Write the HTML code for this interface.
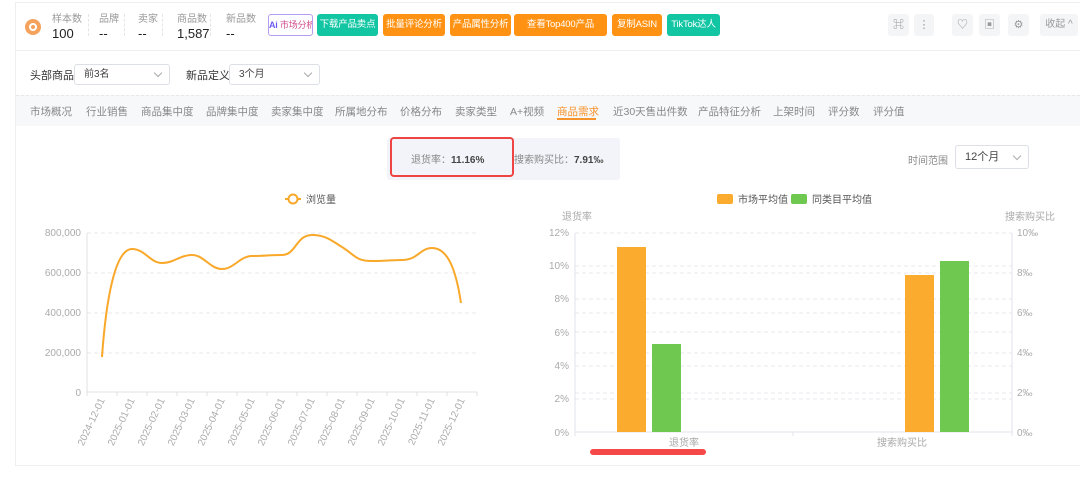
<!DOCTYPE html>
<html><head><meta charset="utf-8"><style>
*{margin:0;padding:0;box-sizing:border-box}
body{width:1080px;height:480px;background:#fff;font-family:"Liberation Sans","Noto Sans CJK SC",sans-serif;position:relative;overflow:hidden;color:#333}
.a{position:absolute;white-space:nowrap}
.lbl{font-size:10px;color:#999}
.val{font-size:13px;color:#222}
.btn{position:absolute;top:14px;height:22px;border-radius:3px;color:#fff;font-size:9.5px;line-height:22px;text-align:center;white-space:nowrap;overflow:hidden;letter-spacing:-0.2px}
.ib{position:absolute;top:14px;height:22px;width:21px;background:#f4f5f7;border-radius:3px;color:#999;font-size:11px;text-align:center;line-height:22px}
.sel{position:absolute;height:21px;border:1px solid #dcdfe6;border-radius:3px;font-size:10px;color:#444;line-height:19px;padding-left:9px;background:#fff}
.sel i{position:absolute;right:8px;top:5px;width:6px;height:6px;border-right:1px solid #aaa;border-bottom:1px solid #aaa;transform:rotate(45deg)}
.tab{position:absolute;top:104px;font-size:10.5px;color:#888;white-space:nowrap}
</style></head><body>
<div class="a" style="left:15px;top:2px;width:1065px;height:464px;border:1px solid #eee;border-right:none"></div>
<div class="a" style="left:16px;top:50px;width:1064px;height:1px;background:#eee"></div>
<div class="a" style="left:25px;top:19px;width:16px;height:16px;border-radius:50%;background:#f5a25d"></div>
<div class="a" style="left:29px;top:23px;width:8px;height:8px;border-radius:50%;border:2px solid #fff"></div>
<div class="a lbl" style="left:52px;top:10px">样本数</div><div class="a val" style="left:52px;top:26px">100</div>
<div class="a" style="left:88px;top:14px;height:22px;border-left:1px dashed #e5e5e5"></div>
<div class="a lbl" style="left:99px;top:10px">品牌</div><div class="a val" style="left:99px;top:26px">--</div>
<div class="a" style="left:124px;top:14px;height:22px;border-left:1px dashed #e5e5e5"></div>
<div class="a lbl" style="left:138px;top:10px">卖家</div><div class="a val" style="left:138px;top:26px">--</div>
<div class="a" style="left:162px;top:14px;height:22px;border-left:1px dashed #e5e5e5"></div>
<div class="a lbl" style="left:177px;top:10px">商品数</div><div class="a val" style="left:177px;top:26px">1,587</div>
<div class="a" style="left:210px;top:14px;height:22px;border-left:1px dashed #e5e5e5"></div>
<div class="a lbl" style="left:226px;top:10px">新品数</div><div class="a val" style="left:226px;top:26px">--</div>
<div class="btn" style="left:268px;width:45px;border:1px solid #b69cf0;color:#d04a8a;background:#fff;line-height:20px;font-size:9px"><b style="color:#6b5cf0">Ai</b> 市场分析</div>
<div class="btn" style="left:317px;width:61px;background:#13c6a3">下载产品卖点</div>
<div class="btn" style="left:383px;width:62px;background:#ff9212">批量评论分析</div>
<div class="btn" style="left:450px;width:61px;background:#ff9212">产品属性分析</div>
<div class="btn" style="left:514px;width:93px;background:#ff9212">查看Top400产品</div>
<div class="btn" style="left:612px;width:50px;background:#ff9212">复制ASIN</div>
<div class="btn" style="left:667px;width:53px;background:#13c6a3">TikTok达人</div>
<div class="ib" style="left:888px">⌘</div>
<div class="ib" style="left:914px;width:20px">⋮</div>
<div class="ib" style="left:952px">♡</div>
<div class="ib" style="left:979px">▣</div>
<div class="ib" style="left:1008px">⚙</div>
<div class="ib" style="left:1040px;width:38px;font-size:10px">收起 ^</div>
<div class="a" style="left:30px;top:67px;font-size:11px;color:#333">头部商品</div>
<div class="sel" style="left:74px;top:64px;width:96px">前3名<i></i></div>
<div class="a" style="left:186px;top:67px;font-size:11px;color:#333">新品定义</div>
<div class="sel" style="left:229px;top:64px;width:91px">3个月<i></i></div>
<div class="a" style="left:16px;top:95px;width:1064px;height:31px;background:#f7f8fa;border-top:1px dashed #e8e8e8"></div>
<div class="tab" style="left:30px">市场概况</div><div class="tab" style="left:86px">行业销售</div><div class="tab" style="left:141px">商品集中度</div><div class="tab" style="left:206px">品牌集中度</div><div class="tab" style="left:271px">卖家集中度</div><div class="tab" style="left:335px">所属地分布</div><div class="tab" style="left:400px">价格分布</div><div class="tab" style="left:455px">卖家类型</div><div class="tab" style="left:510px">A+视频</div>
<div class="tab" style="left:557px;color:#f7932b">商品需求</div>
<div class="a" style="left:557px;top:118px;width:39px;height:2px;background:#f7932b"></div>
<div class="tab" style="left:613px">近30天售出件数</div><div class="tab" style="left:698px">产品特征分析</div><div class="tab" style="left:773px">上架时间</div><div class="tab" style="left:828px">评分数</div><div class="tab" style="left:873px">评分值</div>
<div class="a" style="left:387px;top:138px;width:233px;height:42px;background:#f3f4f9;border-radius:3px"></div>
<div class="a" style="left:390px;top:137px;width:124px;height:40px;border:2.5px solid #ee4444;border-radius:4px"></div>
<div class="a" style="left:411px;top:151px;font-size:10px;color:#888">退货率：<b style="color:#444">11.16%</b></div>
<div class="a" style="left:514px;top:151px;font-size:10px;color:#888">搜索购买比：<b style="color:#444">7.91‰</b></div>
<div class="a" style="left:908px;top:152px;font-size:10px;color:#888">时间范围</div>
<div class="sel" style="left:955px;top:145px;width:74px;height:24px;line-height:22px;font-size:11px">12个月<i style="top:7px"></i></div>
<svg class="a" style="left:0;top:0" width="1080" height="480" font-family="Liberation Sans,Noto Sans CJK SC,sans-serif">
<line x1="285" y1="199" x2="301" y2="199" stroke="#f9a82a" stroke-width="2"/><circle cx="293" cy="199" r="4.5" fill="#fff" stroke="#f9a82a" stroke-width="2"/>
<text x="306" y="203" font-size="10" fill="#555">浏览量</text>
<g stroke="#e8e8e8" stroke-dasharray="4,3"><line x1="87" y1="233" x2="477" y2="233"/><line x1="87" y1="273" x2="477" y2="273"/><line x1="87" y1="313" x2="477" y2="313"/><line x1="87" y1="353" x2="477" y2="353"/></g>
<line x1="87" y1="233" x2="87" y2="392" stroke="#e0e0e0"/><line x1="87" y1="392" x2="477" y2="392" stroke="#e0e0e0"/>
<g font-size="10" fill="#aaa" text-anchor="end"><text x="81" y="236">800,000</text><text x="81" y="276">600,000</text><text x="81" y="316">400,000</text><text x="81" y="356">200,000</text><text x="81" y="396">0</text></g>
<g stroke="#e0e0e0"><line x1="87" y1="392" x2="87" y2="396"/><line x1="117" y1="392" x2="117" y2="396"/><line x1="147" y1="392" x2="147" y2="396"/><line x1="177" y1="392" x2="177" y2="396"/><line x1="207" y1="392" x2="207" y2="396"/><line x1="237" y1="392" x2="237" y2="396"/><line x1="267" y1="392" x2="267" y2="396"/><line x1="297" y1="392" x2="297" y2="396"/><line x1="327" y1="392" x2="327" y2="396"/><line x1="357" y1="392" x2="357" y2="396"/><line x1="387" y1="392" x2="387" y2="396"/><line x1="417" y1="392" x2="417" y2="396"/><line x1="447" y1="392" x2="447" y2="396"/><line x1="477" y1="392" x2="477" y2="396"/></g>
<g font-size="10" fill="#aaa" text-anchor="end">
<text transform="translate(105,400) rotate(-65)">2024-12-01</text><text transform="translate(135,400) rotate(-65)">2025-01-01</text><text transform="translate(165,400) rotate(-65)">2025-02-01</text><text transform="translate(195,400) rotate(-65)">2025-03-01</text><text transform="translate(225,400) rotate(-65)">2025-04-01</text><text transform="translate(255,400) rotate(-65)">2025-05-01</text><text transform="translate(285,400) rotate(-65)">2025-06-01</text><text transform="translate(315,400) rotate(-65)">2025-07-01</text><text transform="translate(345,400) rotate(-65)">2025-08-01</text><text transform="translate(375,400) rotate(-65)">2025-09-01</text><text transform="translate(405,400) rotate(-65)">2025-10-01</text><text transform="translate(435,400) rotate(-65)">2025-11-01</text><text transform="translate(465,400) rotate(-65)">2025-12-01</text></g>
<path fill="none" stroke="#f9a82a" stroke-width="2" d="M102 357 C106 300 115 249 132 249 C145 249 150 263 162 263 C174 263 180 255 192 255 C204 255 210 269 222 269 C234 269 240 256 252 256 C264 256 270 255 282 255 C296 255 296 235 312 235 C326 235 332 241 342 247 C356 256 356 261 372 261 C388 261 392 260 402 260 C418 260 420 248 432 248 C448 248 456 270 461 303"/>
<rect x="717" y="194" width="16" height="10" rx="2" fill="#fbab2e"/><text x="738" y="203" font-size="10" fill="#555">市场平均值</text>
<rect x="791" y="194" width="16" height="10" rx="2" fill="#6fc951"/><text x="812" y="203" font-size="10" fill="#555">同类目平均值</text>
<text x="562" y="220" font-size="10" fill="#aaa">退货率</text><text x="1005" y="220" font-size="10" fill="#aaa">搜索购买比</text>
<g stroke="#e8e8ee" stroke-dasharray="4,3"><line x1="575" y1="233" x2="1012" y2="233"/><line x1="575" y1="266" x2="1012" y2="266"/><line x1="575" y1="299" x2="1012" y2="299"/><line x1="575" y1="332" x2="1012" y2="332"/><line x1="575" y1="366" x2="1012" y2="366"/><line x1="575" y1="399" x2="1012" y2="399"/><line x1="575" y1="273" x2="1012" y2="273"/><line x1="575" y1="313" x2="1012" y2="313"/><line x1="575" y1="353" x2="1012" y2="353"/><line x1="575" y1="393" x2="1012" y2="393"/></g>
<line x1="575" y1="233" x2="575" y2="436" stroke="#e0e3ea"/><line x1="1012" y1="233" x2="1012" y2="436" stroke="#e0e3ea"/><line x1="575" y1="432" x2="1012" y2="432" stroke="#e0e3ea"/><line x1="793" y1="432" x2="793" y2="436" stroke="#e0e3ea"/>
<g font-size="10" fill="#aaa" text-anchor="end"><text x="569" y="236">12%</text><text x="569" y="269">10%</text><text x="569" y="302">8%</text><text x="569" y="336">6%</text><text x="569" y="369">4%</text><text x="569" y="402">2%</text><text x="569" y="436">0%</text></g>
<g font-size="10" fill="#aaa"><text x="1017" y="236">10‰</text><text x="1017" y="276">8‰</text><text x="1017" y="316">6‰</text><text x="1017" y="356">4‰</text><text x="1017" y="396">2‰</text><text x="1017" y="436">0‰</text></g>
<rect x="617" y="247" width="29" height="185" fill="#fbab2e"/><rect x="652" y="344" width="29" height="88" fill="#6fc951"/>
<rect x="905" y="275" width="29" height="157" fill="#fbab2e"/><rect x="940" y="261" width="29" height="171" fill="#6fc951"/>
<text x="684" y="446" font-size="10" fill="#aaa" text-anchor="middle">退货率</text><text x="902" y="446" font-size="10" fill="#aaa" text-anchor="middle">搜索购买比</text>
<rect x="590" y="449" width="116" height="6" rx="3" fill="#f54848"/>
</svg>
</body></html>
